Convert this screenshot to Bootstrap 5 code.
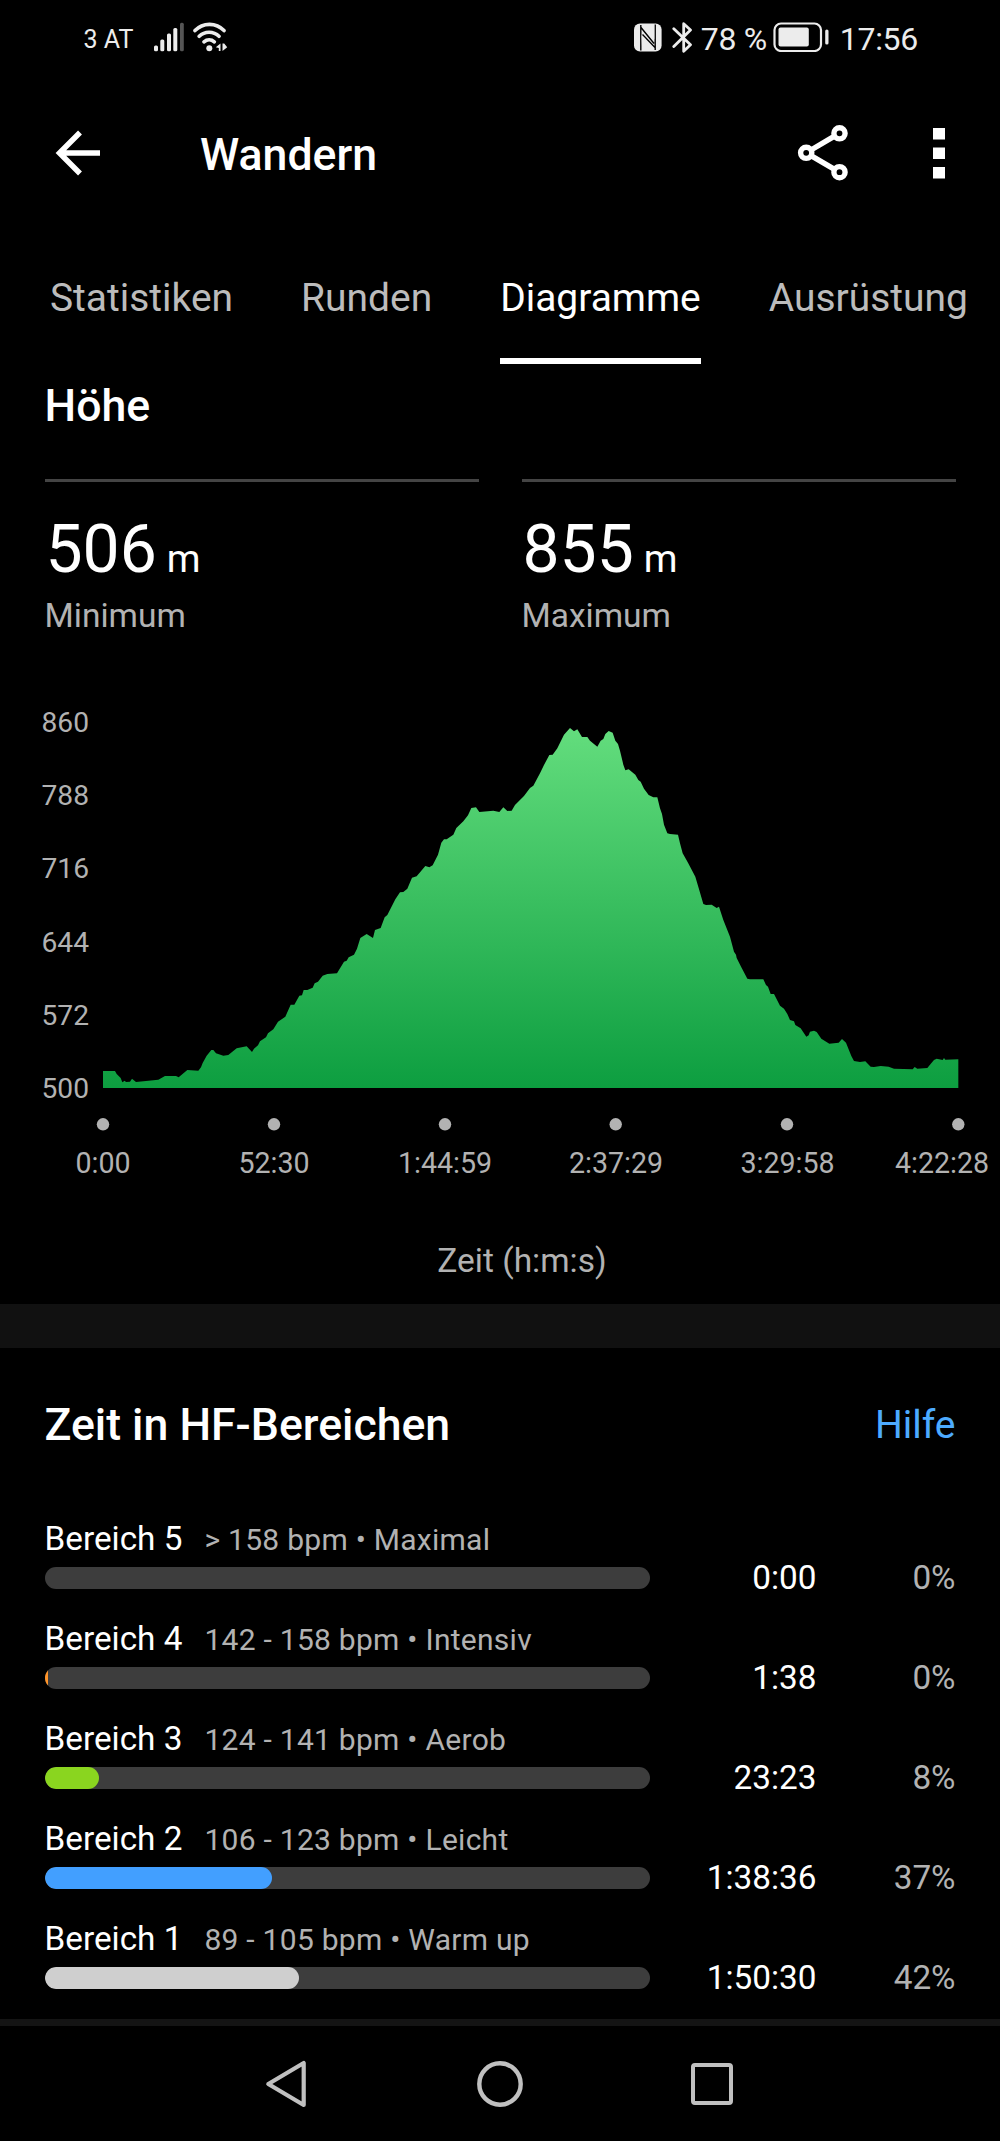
<!DOCTYPE html>
<html lang="de" data-bs-theme="dark">
<head>
<meta charset="utf-8">
<meta name="viewport" content="width=device-width, initial-scale=1">
<title>Wandern</title>
<link href="https://cdn.jsdelivr.net/npm/bootstrap@5.3.0/dist/css/bootstrap.min.css" rel="stylesheet">
<style>
  body { background: #000; color: #fff; font-family: Roboto, "Liberation Sans", sans-serif; width: 1000px; overflow-x: hidden; }
  svg { display: block; flex: none; }
  .gutter { padding-left: 44.5px; padding-right: 44.5px; }
  .grey { color: #b2b2b2; }
  .statusbar { height: 74px; padding: 0 82px 0 83.5px; color: #ececec; }
  .carrier { font-size: 25px; line-height: 30px; padding-top: 5px; width: 70.5px; }
  .status-num { font-size: 32px; line-height: 36px; padding-top: 4px; white-space: nowrap; letter-spacing: -.3px; }
  .appbar { height: 158px; padding-left: 55px; padding-right: 55px; }
  .title { font-size: 44.6px; font-weight: 500; line-height: 54px; }
  .tabs { height: 132px; padding-left: 50px; gap: 68px; flex-wrap: nowrap; }
  .tabs .nav-link { padding: 43px 0 36px; font-size: 38.95px; line-height: 47px; color: #bcbcbc; border-bottom: 6px solid transparent; white-space: nowrap; }
  .tabs .nav-link.active { color: #fff; border-color: #fff; }
  .stats { gap: 43px; margin-top: 31px; }
  .stat { border-top: 3px solid #444; padding-top: 28px; }
  .stat-value { font-size: 66px; line-height: 80px; gap: 10px; padding-left: 1px; }
  .stat-value span { font-size: 38.5px; line-height: 46px; }
  .caption-text { font-size: 33.5px; line-height: 40px; }
  .axis text { font-size: 28.6px; fill: #b2b2b2; }
  .axis .ylabels text { font-size: 28.2px; }
  .band { height: 44px; background: #111; }
  .help { font-size: 39px; line-height: 54px; color: #4dabff; text-decoration: none; }
  .zone { height: 100px; }
  .zone-head { height: 40px; line-height: 40px; gap: 22px; }
  .zone-name { font-size: 33.3px; }
  .zone-range { font-size: 30px; letter-spacing: .27px; }
  .zone-row { height: 38px; line-height: 38px; font-size: 33.3px; }
  .zone .progress { width: 605.5px; height: 22px; border-radius: 11px; background: #3d3d3d; }
  .zone .progress-bar { border-radius: 11px; }
  .zone .sliver { border-radius: 0; }
  .zone-time { width: 166.5px; text-align: right; }
  .c-orange { background: #ff9429; } .c-green { background: #8ad51f; } .c-blue { background: #429fff; } .c-light { background: #cfcfcf; }
  .hairline { height: 7px; background: #141414; }
  .sysnav { height: 115px; }
</style>
</head>
<body>
<header>
  <div class="statusbar d-flex align-items-center">
    <div class="carrier">3 AT</div>
    <svg width="31" height="30" viewBox="154 22 31 30" fill="#ececec">
      <rect x="154" y="45.5" width="4" height="5.7" rx="1.5"/><rect x="160.3" y="39.5" width="4" height="11.7" rx="1.5"/>
      <rect x="167" y="33.5" width="4" height="17.7" rx="1.5"/><rect x="173.3" y="28" width="4" height="23.2" rx="1.5"/>
      <rect x="180" y="22.7" width="3.8" height="28.5" rx="1.5" fill="#555"/>
    </svg>
    <svg class="ms-2" width="36" height="30" viewBox="193 22 36 30" fill="none" stroke="#ececec" stroke-width="3.6" stroke-linecap="round">
      <path d="M195 30.6a20 20 0 0 1 29 0M199.2 36.3a14 14 0 0 1 19.8 0M204 41.8a8 8 0 0 1 10.3 0"/>
      <circle cx="209.3" cy="48.3" r="3" fill="#ececec" stroke="none"/>
      <path d="M220.5 43.5v7.5h-1.7V48l-3-.8zM222.500 51v-7.500h1.700l3 3.700z" fill="#ececec" stroke="none"/>
    </svg>
    <div class="ms-auto d-flex align-items-center">
      <svg width="28" height="29" viewBox="633 22.500 28 29">
        <rect x="633" y="23" width="27.600" height="28" rx="6" fill="#ececec"/>
        <path d="M639.800 24.500V50M640 27l13 16M654.200 49.500V24M654 47L641.500 34" fill="none" stroke="#000" stroke-width="1.400"/>
        <path d="M640.500 34.500L645 39v11h-3.800zM649.500 24h3.800v14.500l-3.800-4.500z" fill="#ececec"/>
      </svg>
      <svg style="margin-left:10px" width="21" height="31" viewBox="670.500 21.500 21 31" fill="none" stroke="#ececec" stroke-width="2.800" stroke-linejoin="round" stroke-linecap="round"><path d="M672.300 28.300L689 44.300l-6.800 6.500V23.200L689 29.500 672.300 46"/></svg>
      <div class="status-num" style="width:73px;padding-left:8px">78&nbsp;%</div>
      <svg style="margin-left:7px" width="56" height="30" viewBox="772.500 22.500 56 30"><rect x="774" y="24" width="46.500" height="27.500" rx="6.500" fill="none" stroke="#ececec" stroke-width="2.200"/><rect x="778" y="28" width="30.300" height="19" rx="2" fill="#ececec"/><rect x="824.700" y="30" width="3.300" height="15" rx="1.600" fill="#ececec"/></svg>
      <div class="status-num" style="margin-left:11px">17:56</div>
    </div>
  </div>
  <div class="appbar d-flex align-items-center">
    <svg width="46" height="46" viewBox="55 130 46 46" fill="none" stroke="#fff" stroke-width="5.500"><path d="M100 153H60M80 132.500L59.500 153 80 173.500"/></svg>
    <div class="title" style="margin-left:99px;padding-top:3px">Wandern</div>
    <svg class="ms-auto" width="52" height="58" viewBox="796.500 124 52 58" fill="none" stroke="#fff" stroke-width="5.400"><circle cx="805.700" cy="152.800" r="5.600"/><circle cx="839" cy="133.300" r="5.600"/><circle cx="839" cy="172.200" r="5.600"/><path d="M810.500 150L834 136.200M810.500 155.600L834 169.400"/></svg>
    <svg style="margin-left:84.500px" width="12" height="51" viewBox="0 0 12 51" fill="#fff"><path d="M0 0h12v11.500H0zM0 19.500h12V31H0zM0 39h12v11.500H0z"/></svg>
  </div>
  <nav class="nav tabs">
    <a class="nav-link" href="#">Statistiken</a>
    <a class="nav-link" href="#">Runden</a>
    <a class="nav-link active" href="#">Diagramme</a>
    <a class="nav-link" href="#">Ausrüstung</a>
  </nav>
</header>
<main>
  <section>
    <div class="gutter">
      <h2 class="title m-0" style="padding:15px 0">Höhe</h2>
      <div class="stats d-flex">
        <div class="stat w-50"><div class="stat-value d-flex align-items-baseline">506<span>m</span></div><div class="caption-text grey" style="margin-top:6px">Minimum</div></div>
        <div class="stat w-50"><div class="stat-value d-flex align-items-baseline">855<span>m</span></div><div class="caption-text grey" style="margin-top:6px">Maximum</div></div>
      </div>
    </div>
    <svg class="axis" width="1000" height="564" viewBox="0 636 1000 564">
      <defs><linearGradient id="elev" x1="0" y1="0" x2="0" y2="1"><stop offset="0" stop-color="#63dd7d"/><stop offset="1" stop-color="#0d9e40"/></linearGradient></defs>
      <path transform="translate(90 700) scale(.33333)" fill="url(#elev)" d="M39 1164V1113L75 1113 80 1122 92 1134 97 1147 104 1142 108 1146 120 1145 126 1136 138 1146 168 1143 205 1139 225 1128 258 1128 266 1132 292 1110 325 1112 333 1102 338 1089 350 1067 364 1050 370 1050 378 1060 400 1067 415 1065 440 1045 470 1039 486 1056 492 1046 504 1036 510 1024 528 1012 534 1000 550 988 564 965 586 950 602 914 613 914 628 887 636 886 641 870 652 870 668 863 674 850 684 845 698 827 712 822 741 820 762 785 770 782 776 772 792 764 801 746 811 714 830 702 849 714 855 690 872 684 884 652 892 645 916 598 930 577 940 576 952 566 966 533 980 529 1006 498 1018 502 1028 496 1044 464 1054 428 1062 418 1070 418 1090 404 1099 384 1120 364 1134 346 1144 324 1158 322 1168 336 1210 332 1228 336 1240 322 1252 333 1265 332 1275 315 1302 288 1320 264 1330 257 1350 220 1362 195 1378 165 1388 164 1402 145 1422 104 1440 84 1452 94 1462 88 1476 111 1492 111 1500 122 1522 140 1532 122 1540 117 1546 102 1556 93 1568 98 1576 122 1584 132 1590 152 1600 194 1606 211 1616 208 1636 224 1645 240 1652 245 1662 266 1676 285 1690 292 1702 292 1710 325 1716 342 1722 374 1732 400 1740 402 1764 404 1770 430 1778 460 1794 488 1816 530 1826 564 1840 612 1848 615 1865 614 1880 624 1887 620 1900 660 1920 710 1932 755 1938 764 1940 774 1954 802 1972 836 1980 838 2020 838 2028 855 2034 860 2042 882 2052 882 2070 917 2082 926 2092 942 2100 960 2112 964 2116 975 2132 985 2149 1010 2156 1006 2160 995 2172 992 2180 996 2194 1016 2218 1031 2246 1028 2256 1017 2268 1028 2284 1068 2292 1083 2310 1086 2326 1084 2342 1100 2352 1101 2372 1098 2396 1100 2412 1106 2468 1108 2474 1101 2482 1106 2512 1104 2520 1094 2532 1080 2540 1076 2558 1080 2562 1074 2566 1079 2605 1078V1164Z"/>
      <g class="ylabels" text-anchor="end"><text x="89" y="732">860</text><text x="89" y="805">788</text><text x="89" y="878">716</text><text x="89" y="951.500">644</text><text x="89" y="1024.500">572</text><text x="89" y="1097.500">500</text></g>
      <g fill="#b2b2b2"><circle cx="103" cy="1124.300" r="6.200"/><circle cx="274" cy="1124.300" r="6.200"/><circle cx="445" cy="1124.300" r="6.200"/><circle cx="615.700" cy="1124.300" r="6.200"/><circle cx="787" cy="1124.300" r="6.200"/><circle cx="958.300" cy="1124.300" r="6.200"/></g>
      <g text-anchor="middle"><text x="103" y="1173.300">0:00</text><text x="274" y="1173.300">52:30</text><text x="445" y="1173.300">1:44:59</text><text x="616" y="1173.300">2:37:29</text><text x="787.500" y="1173.300">3:29:58</text><text x="942" y="1173.300">4:22:28</text></g>
    </svg>
    <div class="caption-text grey text-center" style="padding:41px 0 23px 44px">Zeit (h:m:s)</div>
  </section>
  <div class="band"></div>
  <section class="gutter">
    <div class="d-flex justify-content-between" style="padding:50px 0 67px">
      <h2 class="title m-0">Zeit in HF-Bereichen</h2><a class="help" href="#">Hilfe</a>
    </div>
    <div class="zone"><div class="zone-head d-flex align-items-baseline"><span class="zone-name">Bereich 5</span><span class="zone-range grey">&gt; 158 bpm • Maximal</span></div>
      <div class="zone-row d-flex align-items-center"><div class="progress"></div><span class="zone-time">0:00</span><span class="grey ms-auto">0%</span></div></div>
    <div class="zone"><div class="zone-head d-flex align-items-baseline"><span class="zone-name">Bereich 4</span><span class="zone-range grey">142 - 158 bpm • Intensiv</span></div>
      <div class="zone-row d-flex align-items-center"><div class="progress"><div class="progress-bar sliver c-orange" style="width:.62%"></div></div><span class="zone-time">1:38</span><span class="grey ms-auto">0%</span></div></div>
    <div class="zone"><div class="zone-head d-flex align-items-baseline"><span class="zone-name">Bereich 3</span><span class="zone-range grey">124 - 141 bpm • Aerob</span></div>
      <div class="zone-row d-flex align-items-center"><div class="progress"><div class="progress-bar c-green" style="width:8.95%"></div></div><span class="zone-time">23:23</span><span class="grey ms-auto">8%</span></div></div>
    <div class="zone"><div class="zone-head d-flex align-items-baseline"><span class="zone-name">Bereich 2</span><span class="zone-range grey">106 - 123 bpm • Leicht</span></div>
      <div class="zone-row d-flex align-items-center"><div class="progress"><div class="progress-bar c-blue" style="width:37.65%"></div></div><span class="zone-time">1:38:36</span><span class="grey ms-auto">37%</span></div></div>
    <div class="zone"><div class="zone-head d-flex align-items-baseline"><span class="zone-name">Bereich 1</span><span class="zone-range grey">89 - 105 bpm • Warm up</span></div>
      <div class="zone-row d-flex align-items-center"><div class="progress"><div class="progress-bar c-light" style="width:42.1%"></div></div><span class="zone-time">1:50:30</span><span class="grey ms-auto">42%</span></div></div>
  </section>
</main>
<div class="hairline"></div>
<footer class="sysnav d-flex align-items-center" style="padding-left:264px">
  <svg width="44" height="50" viewBox="264 2058.500 44 50" fill="none" stroke="#c0c0c0" stroke-width="4.200" stroke-linejoin="round"><path d="M303.700 2062.500V2104.500L268.300 2083.500z"/></svg>
  <svg style="margin-left:167px" width="50" height="50" viewBox="0 0 50 50" fill="none" stroke="#c0c0c0" stroke-width="4.400"><circle cx="25" cy="25" r="20.700"/></svg>
  <svg style="margin-left:165px" width="44" height="44" viewBox="0 0 44 44" fill="none" stroke="#c0c0c0" stroke-width="4"><rect x="3" y="3" width="38" height="38" rx="2"/></svg>
</footer>
<script src="https://cdn.jsdelivr.net/npm/bootstrap@5.3.0/dist/js/bootstrap.bundle.min.js"></script>
</body>
</html>
